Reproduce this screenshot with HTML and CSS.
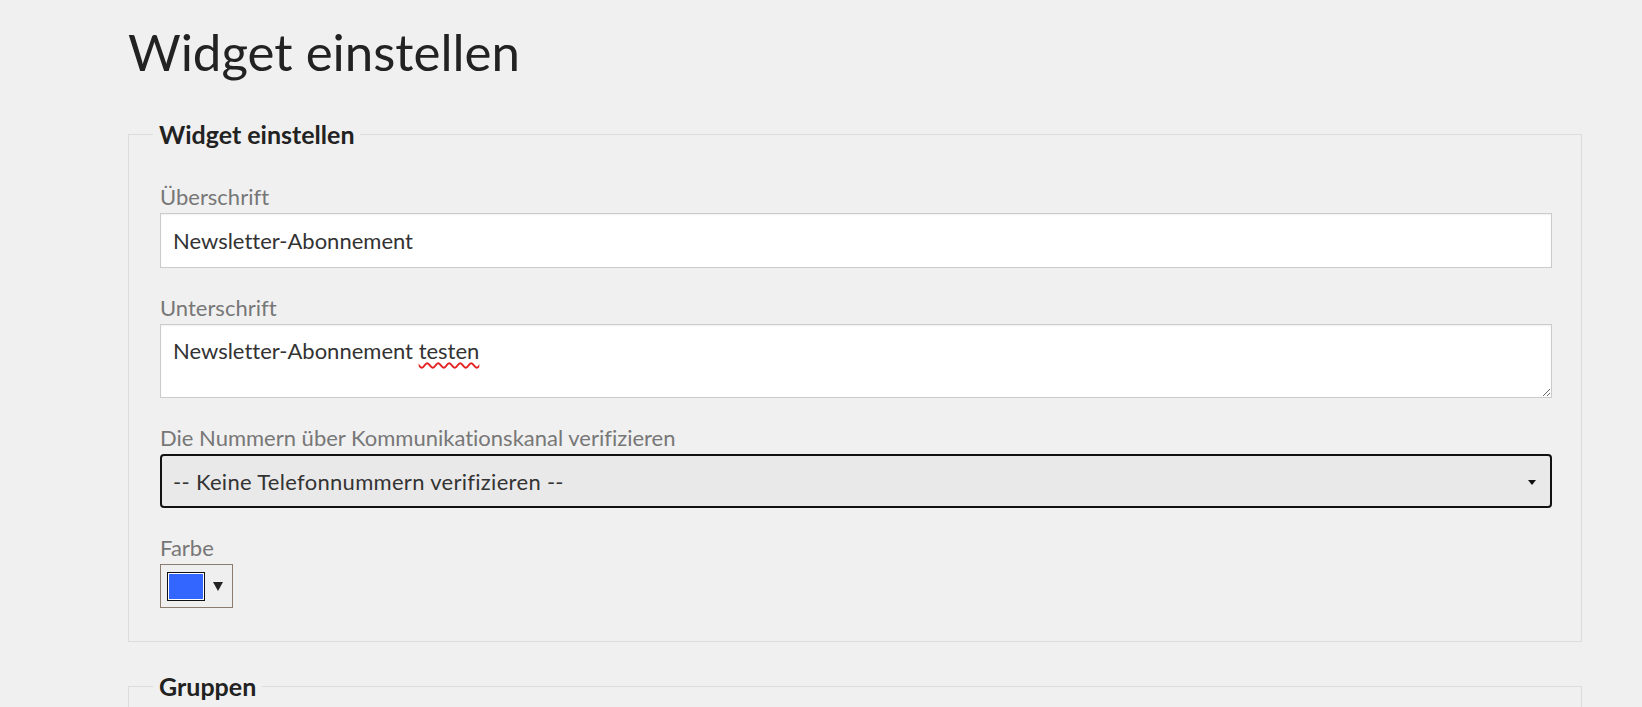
FILE: index.html
```html
<!DOCTYPE html>
<html lang="de">
<head>
    <meta charset="UTF-8">
    <title>Widget einstellen</title>
    <link rel="stylesheet" href="styles.css">
</head>
<body>
<div class="page">
    <h1 class="pageTitle">Widget einstellen</h1>

    <fieldset class="box">
        <legend>Widget einstellen</legend>

        <div class="formGroup">
            <label class="fieldLabel" for="headline">Überschrift</label>
            <input class="textField" id="headline" type="text" value="Newsletter-Abonnement">
        </div>

        <div class="formGroup">
            <label class="fieldLabel">Unterschrift</label>
            <div class="textArea">Newsletter-Abonnement <span class="typo">testen</span></div>
        </div>

        <div class="formGroup">
            <label class="fieldLabel" for="verify">Die Nummern über Kommunikationskanal verifizieren</label>
            <div class="selectWrap">
                <select class="selectField" id="verify">
                    <option>-- Keine Telefonnummern verifizieren --</option>
                </select>
            </div>
        </div>

        <div class="formGroup last">
            <label class="fieldLabel">Farbe</label>
            <div class="colorPick">
                <span class="swatch"></span>
                <span class="colorArrow"></span>
            </div>
        </div>
    </fieldset>

    <fieldset class="box">
        <legend>Gruppen</legend>
        <div class="spacer"></div>
    </fieldset>
</div>
</body>
</html>
```

FILE: styles.css
```css
*{padding: 0;margin: 0;box-sizing: border-box;}
html, body{
    background: #f0f0f0;
    color: #333;
    font-family: Lato, "Open Sans", sans-serif;
    font-variant-ligatures: none;
    overflow: hidden;
}
.page{
    width: 1454px;
    margin-left: 128px;
    padding-top: 21px;
}
.pageTitle{
    font-size: 51px;
    line-height: 62px;
    font-weight: 400;
    color: #222;
    margin-bottom: 37px;
}
.box{
    border: 1px solid #dcdcdc;
    padding: 36px 29px 33px 31px;
    margin-bottom: 30px;
}
.box legend{
    font-size: 25px;
    line-height: 28px;
    font-weight: 700;
    color: #222;
    padding: 0 6px;
    margin-left: -7px;
}
.formGroup{
    margin-bottom: 27px;
}
.formGroup.last{margin-bottom: 0;}
.fieldLabel{
    display: block;
    font-size: 22px;
    line-height: 25px;
    color: #777;
    margin-bottom: 4px;
}
.textField{
    display: block;
    width: 100%;
    height: 55px;
    border: 1px solid #cbcbcb;
    box-shadow: inset 0 1px 2px rgba(0,0,0,0.06);
    background: #fff;
    padding: 0 12px;
    font-family: inherit;
    font-variant-ligatures: none;
    font-size: 22px;
    color: #333;
    outline: none;
}
.textArea{
    width: 100%;
    height: 74px;
    border: 1px solid #cbcbcb;
    box-shadow: inset 0 1px 2px rgba(0,0,0,0.06);
    background: #fff;
    padding: 13px 12px;
    font-size: 22px;
    line-height: 26px;
    color: #333;
    overflow: auto;
    resize: vertical;
}
.typo{
    text-decoration: underline wavy #e52222;
    text-decoration-thickness: 1.5px;
    text-underline-offset: 3px;
}
.selectWrap{
    position: relative;
}
.selectWrap:after{
    content: '';
    position: absolute;
    right: 16px;
    top: 26px;
    border-left: 4px solid transparent;
    border-right: 4px solid transparent;
    border-top: 5px solid #111;
    pointer-events: none;
}
.selectField{
    display: block;
    width: 100%;
    height: 54px;
    -webkit-appearance: none;
    appearance: none;
    border: 2px solid #111;
    border-radius: 4px;
    background: #e9e9e9;
    padding: 0 11px;
    font-family: inherit;
    font-variant-ligatures: none;
    font-size: 22px;
    letter-spacing: 0.3px;
    color: #333;
    outline: none;
}
.colorPick{
    display: flex;
    align-items: center;
    width: 73px;
    height: 44px;
    border: 1px solid #8a7c6e;
    background: #efefef;
    padding-left: 6px;
}
.swatch{
    width: 38px;
    height: 29px;
    background: #3366ff;
    border: 1px solid #111;
    box-shadow: inset 0 0 0 1px #fff;
}
.colorArrow{
    width: 0;
    height: 0;
    border-left: 5px solid transparent;
    border-right: 5px solid transparent;
    border-top: 9px solid #222;
    margin-left: 8px;
}
.spacer{height: 60px;}
```
